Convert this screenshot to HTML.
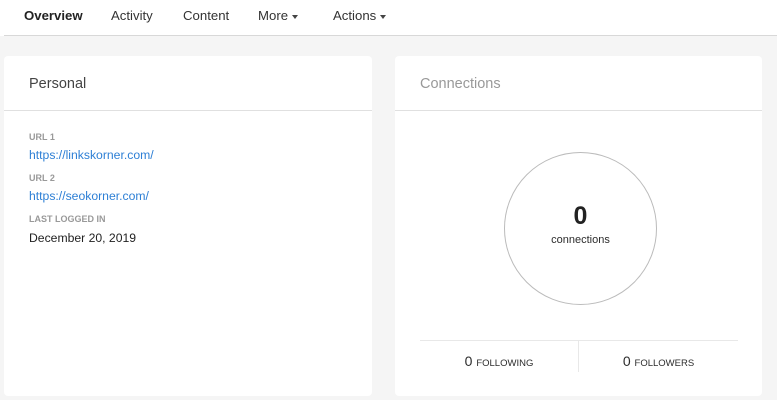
<!DOCTYPE html>
<html><head><style>
*{margin:0;padding:0;box-sizing:border-box}
body{width:777px;height:400px;background:#f5f5f5;font-family:"Liberation Sans",sans-serif;color:#2c2c2c;position:relative;overflow:hidden}
.nav{position:absolute;left:0;top:0;width:777px;height:36px;background:#fff}
.navline{position:absolute;left:4px;top:35px;width:773px;height:1px;background:#d8d8d8}
.nav span{position:absolute;top:8px;font-size:13.2px;color:#333}
.caret{display:inline-block;width:0;height:0;border-left:3.5px solid transparent;border-right:3.5px solid transparent;border-top:4px solid #444;vertical-align:middle;margin-left:4px}
.card{position:absolute;top:56px;width:368px;height:340px;background:#fff;border-radius:4px}
.card .hd{height:55px;border-bottom:1px solid #e0e0e0;padding:20px 0 0 25px;font-size:14.5px;color:#444}
.lbl{position:absolute;left:25px;font-size:9px;font-weight:bold;color:#999}
.val{position:absolute;left:25px;font-size:12.2px}
a{color:#2d7fd5;text-decoration:none}
.circle{position:absolute;left:109px;top:96px;width:153px;height:153px;border:1px solid #bbb;border-radius:50%;text-align:center}
.small{font-size:9.5px}
</style></head><body>
<div class="nav">
<span style="left:24px;font-weight:bold;color:#222">Overview</span>
<span style="left:111px">Activity</span>
<span style="left:183px">Content</span>
<span style="left:258px">More<i class="caret"></i></span>
<span style="left:333px">Actions<i class="caret"></i></span>
</div>
<div class="navline"></div>
<div class="card" style="left:4px">
<div class="hd">Personal</div>
<div class="lbl" style="top:76px">URL 1</div>
<div class="val" style="top:92px"><a>https://linkskorner.com/</a></div>
<div class="lbl" style="top:117px">URL 2</div>
<div class="val" style="top:133px"><a>https://seokorner.com/</a></div>
<div class="lbl" style="top:158px">LAST LOGGED IN</div>
<div class="val" style="top:175px;color:#222">December 20, 2019</div>
</div>
<div class="card" style="left:395px;width:367px">
<div class="hd" style="color:#999">Connections</div>
<div class="circle"><div style="margin-top:49px;font-size:25px;font-weight:bold;color:#222">0</div><div style="font-size:11px;margin-top:3px">connections</div></div>
<div style="position:absolute;left:25px;top:284px;width:318px;height:1px;background:#e8e8e8"></div>
<div style="position:absolute;left:183px;top:285px;width:1px;height:31px;background:#e8e8e8"></div>
<div style="position:absolute;left:25px;top:297px;width:158px;text-align:center;font-size:14px">0 <span class="small">FOLLOWING</span></div>
<div style="position:absolute;left:184px;top:297px;width:159px;text-align:center;font-size:14px">0 <span class="small">FOLLOWERS</span></div>
</div>
</body></html>
